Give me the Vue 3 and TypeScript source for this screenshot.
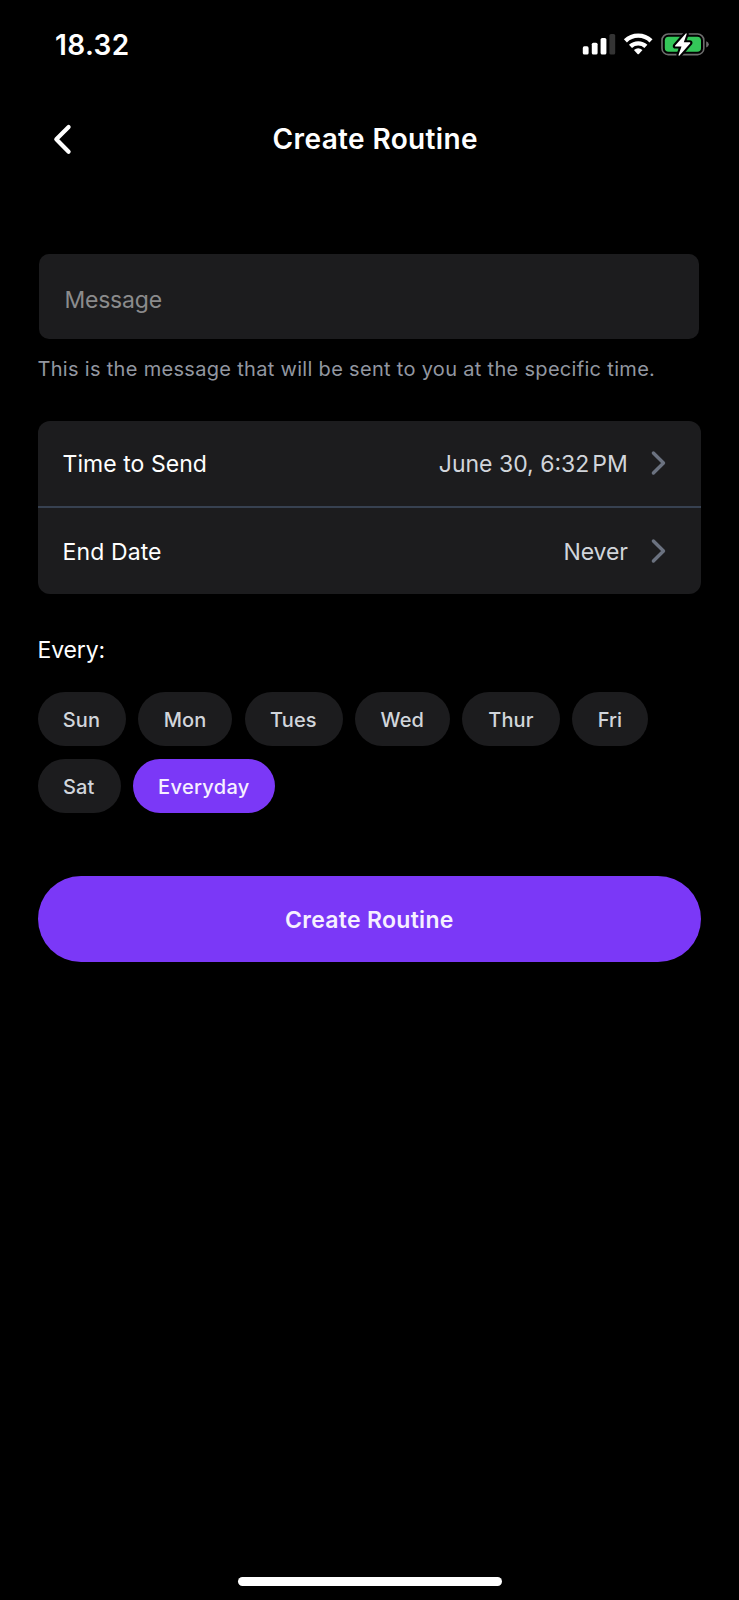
<script setup lang="ts">
import { ref } from 'vue'

interface Day {
  id: string
  label: string
}

const days: Day[] = [
  { id: 'sun', label: 'Sun' },
  { id: 'mon', label: 'Mon' },
  { id: 'tues', label: 'Tues' },
  { id: 'wed', label: 'Wed' },
  { id: 'thur', label: 'Thur' },
  { id: 'fri', label: 'Fri' },
  { id: 'sat', label: 'Sat' },
  { id: 'everyday', label: 'Everyday' },
]

const selected = ref<string>('everyday')
const message = ref<string>('')
</script>

<template>
  <div class="screen">
    <header class="status">
      <span class="clock">18.32</span>
      <svg class="indicators" width="128" height="28" viewBox="0 0 128 28">
        <g fill="#fff">
          <rect x="0.8" y="16.3" width="5.8" height="8.3" rx="1.6" />
          <rect x="9.8" y="12.7" width="5.8" height="11.9" rx="1.6" />
          <rect x="18.6" y="8" width="5.8" height="16.6" rx="1.6" />
          <rect x="27.4" y="4" width="5.8" height="20.6" rx="1.6" fill="#343434" />
        </g>
        <g fill="none" stroke="#fff" stroke-width="4.4">
          <path d="M43.4 10.8 A18.4 18.4 0 0 1 69 10.8" />
          <path d="M48.5 16.4 A11.2 11.2 0 0 1 63.9 16.4" />
        </g>
        <path d="M51.9 20 Q56.2 16.4 60.5 20 L56.9 24 Q56.2 24.7 55.5 24 Z" fill="#fff" />
        <rect x="80" y="4" width="41.8" height="20.6" rx="6.2" fill="none" stroke="#6d6d6d" stroke-width="1.6" />
        <rect x="82.8" y="6.8" width="36.2" height="15" rx="3.8" fill="#34c759" />
        <path d="M124.2 11.2 Q126.8 12 126.8 14.3 Q126.8 16.6 124.2 17.4 Z" fill="#6d6d6d" />
        <path
          d="M103.8 3.4 L93 15.7 Q92.6 16.5 93.5 16.5 L99.5 16.5 L96.5 25 Q96.5 26.2 97.5 25.5 L108.3 13.2 Q108.6 12.3 107.7 12.3 L101.8 12.3 L104.7 4 Q104.6 2.8 103.8 3.4 Z"
          fill="#fff"
          stroke="#000"
          stroke-width="4.2"
          paint-order="stroke"
          stroke-linejoin="round"
        />
      </svg>
    </header>

    <nav class="nav">
      <button class="back" aria-label="Back">
        <svg width="20" height="34" viewBox="0 0 20 34">
          <path d="M16.6 4.9 L4.3 17.2 L16.6 29.8" fill="none" stroke="#fff" stroke-width="4.2" stroke-linecap="round" stroke-linejoin="round" />
        </svg>
      </button>
      <h1 class="title">Create Routine</h1>
    </nav>

    <main class="form">
      <input v-model="message" class="message" type="text" placeholder="Message" />
      <p class="hint">This is the message that will be sent to you at the specific time.</p>

      <section class="card">
        <div class="row">
          <span class="label time-label">Time to Send</span>
          <span class="value date">June 30, 6:32<span class="meridiem">PM</span></span>
          <svg class="chevron" width="18" height="28" viewBox="0 0 18 28">
            <path d="M3.4 4 L13.5 14 L3.4 24" fill="none" stroke="#6b7280" stroke-width="3.4" stroke-linecap="round" stroke-linejoin="round" />
          </svg>
        </div>
        <div class="row">
          <span class="label end-label">End Date</span>
          <span class="value never">Never</span>
          <svg class="chevron" width="18" height="28" viewBox="0 0 18 28">
            <path d="M3.4 4 L13.5 14 L3.4 24" fill="none" stroke="#6b7280" stroke-width="3.4" stroke-linecap="round" stroke-linejoin="round" />
          </svg>
        </div>
      </section>

      <h2 class="every">Every:</h2>
      <div class="chips">
        <button
          v-for="day in days"
          :key="day.id"
          class="chip"
          :class="[day.id, { active: selected === day.id }]"
          @click="selected = day.id"
        >
          {{ day.label }}
        </button>
      </div>

      <button class="submit">Create Routine</button>
    </main>

    <div class="home"></div>
  </div>
</template>

<style>
html,
body {
  margin: 0;
  background: #000;
}
</style>

<style scoped>
.screen {
  box-sizing: border-box;
  width: 739px;
  height: 1600px;
  display: flex;
  flex-direction: column;
  overflow: hidden;
  background: #000;
  color: #fff;
  font-family: Inter, "Liberation Sans", sans-serif;
}
button,
input {
  border: 0;
  margin: 0;
  padding: 0;
  font-family: inherit;
  color: inherit;
  background: none;
}
h1,
h2,
p {
  margin: 0;
}
.status {
  height: 90px;
  flex: none;
  display: flex;
  justify-content: space-between;
  align-items: flex-start;
  box-sizing: border-box;
  padding: 27px 29px 0 55px;
}
.clock {
  font-size: 28px;
  line-height: 37px;
  font-weight: 600;
  letter-spacing: 0.4px;
}
.indicators {
  margin-top: 3px;
}
.nav {
  height: 98px;
  flex: none;
  display: grid;
  grid-template-columns: 120px 1fr 120px;
  align-items: center;
}
.back {
  display: flex;
  padding-left: 52px;
}
.title {
  font-size: 28px;
  font-weight: 600;
  line-height: 36px;
  letter-spacing: 0.36px;
  text-align: center;
  white-space: nowrap;
  padding-left: 11.5px;
}
.form {
  flex: 1;
  display: flex;
  flex-direction: column;
  align-items: stretch;
  padding: 66px 37.8px 0 37.5px;
}
.message {
  box-sizing: border-box;
  height: 85.2px;
  margin: 0 1.9px;
  padding: 7px 25px 0;
  border-radius: 10px;
  background: #1c1c1e;
  font-size: 23px;
  letter-spacing: -0.2px;
}
.message::placeholder {
  color: #8b8b8c;
  opacity: 1;
}
.hint {
  margin-top: 14.8px;
  height: 30px;
  line-height: 30px;
  font-size: 20px;
  letter-spacing: 0.31px;
  color: #9297a0;
  white-space: nowrap;
}
.card {
  margin-top: 36.8px;
  border-radius: 12px;
  background: #1c1c1e;
}
.row {
  box-sizing: border-box;
  height: 87.2px;
  display: flex;
  align-items: center;
  padding: 0 33.4px 0 25px;
  font-size: 23px;
}
.row + .row {
  height: 85.9px;
}
.row:first-child {
  border-bottom: 2px solid #374151;
}
.label {
  flex: 1;
  padding-top: 2px;
}
.time-label {
  letter-spacing: 0.05px;
}
.end-label {
  letter-spacing: 0.12px;
}
.value {
  padding-top: 2px;
  color: #d1d5db;
  white-space: nowrap;
}
.meridiem {
  margin-left: 3px;
}
.never {
  letter-spacing: -0.1px;
}
.chevron {
  margin-left: 22px;
}
.every {
  margin-top: 41.4px;
  height: 30px;
  line-height: 30px;
  font-size: 23px;
  font-weight: 400;
  letter-spacing: -0.15px;
}
.chips {
  margin-top: 26.5px;
  display: flex;
  flex-wrap: wrap;
  gap: 12.6px;
}
.chip {
  height: 54.2px;
  padding: 2px 0.6px 0 0;
  border-radius: 28px;
  background: #1c1c1e;
  color: #d1d5db;
  font-size: 20px;
  font-weight: 500;
  letter-spacing: 0.1px;
  white-space: nowrap;
}
.sun { width: 88.4px; }
.mon { width: 93.6px; }
.tues { width: 98px; }
.wed { width: 94.6px; }
.thur { width: 97.4px; }
.fri { width: 75.6px; }
.sat { width: 83px; }
.everyday {
  width: 142.2px;
  letter-spacing: 0.32px;
}
.chip.active {
  background: #7b38f7;
  color: #f6f0ff;
}
.submit {
  margin-top: 63px;
  height: 86px;
  flex: none;
  padding-top: 2px;
  border-radius: 43px;
  background: #7b38f7;
  color: #f6f0ff;
  font-size: 23px;
  font-weight: 600;
  letter-spacing: 0.3px;
}
.home {
  flex: none;
  align-self: center;
  width: 264px;
  height: 9px;
  border-radius: 5px;
  background: #fff;
  margin-bottom: 14.5px;
}
</style>
